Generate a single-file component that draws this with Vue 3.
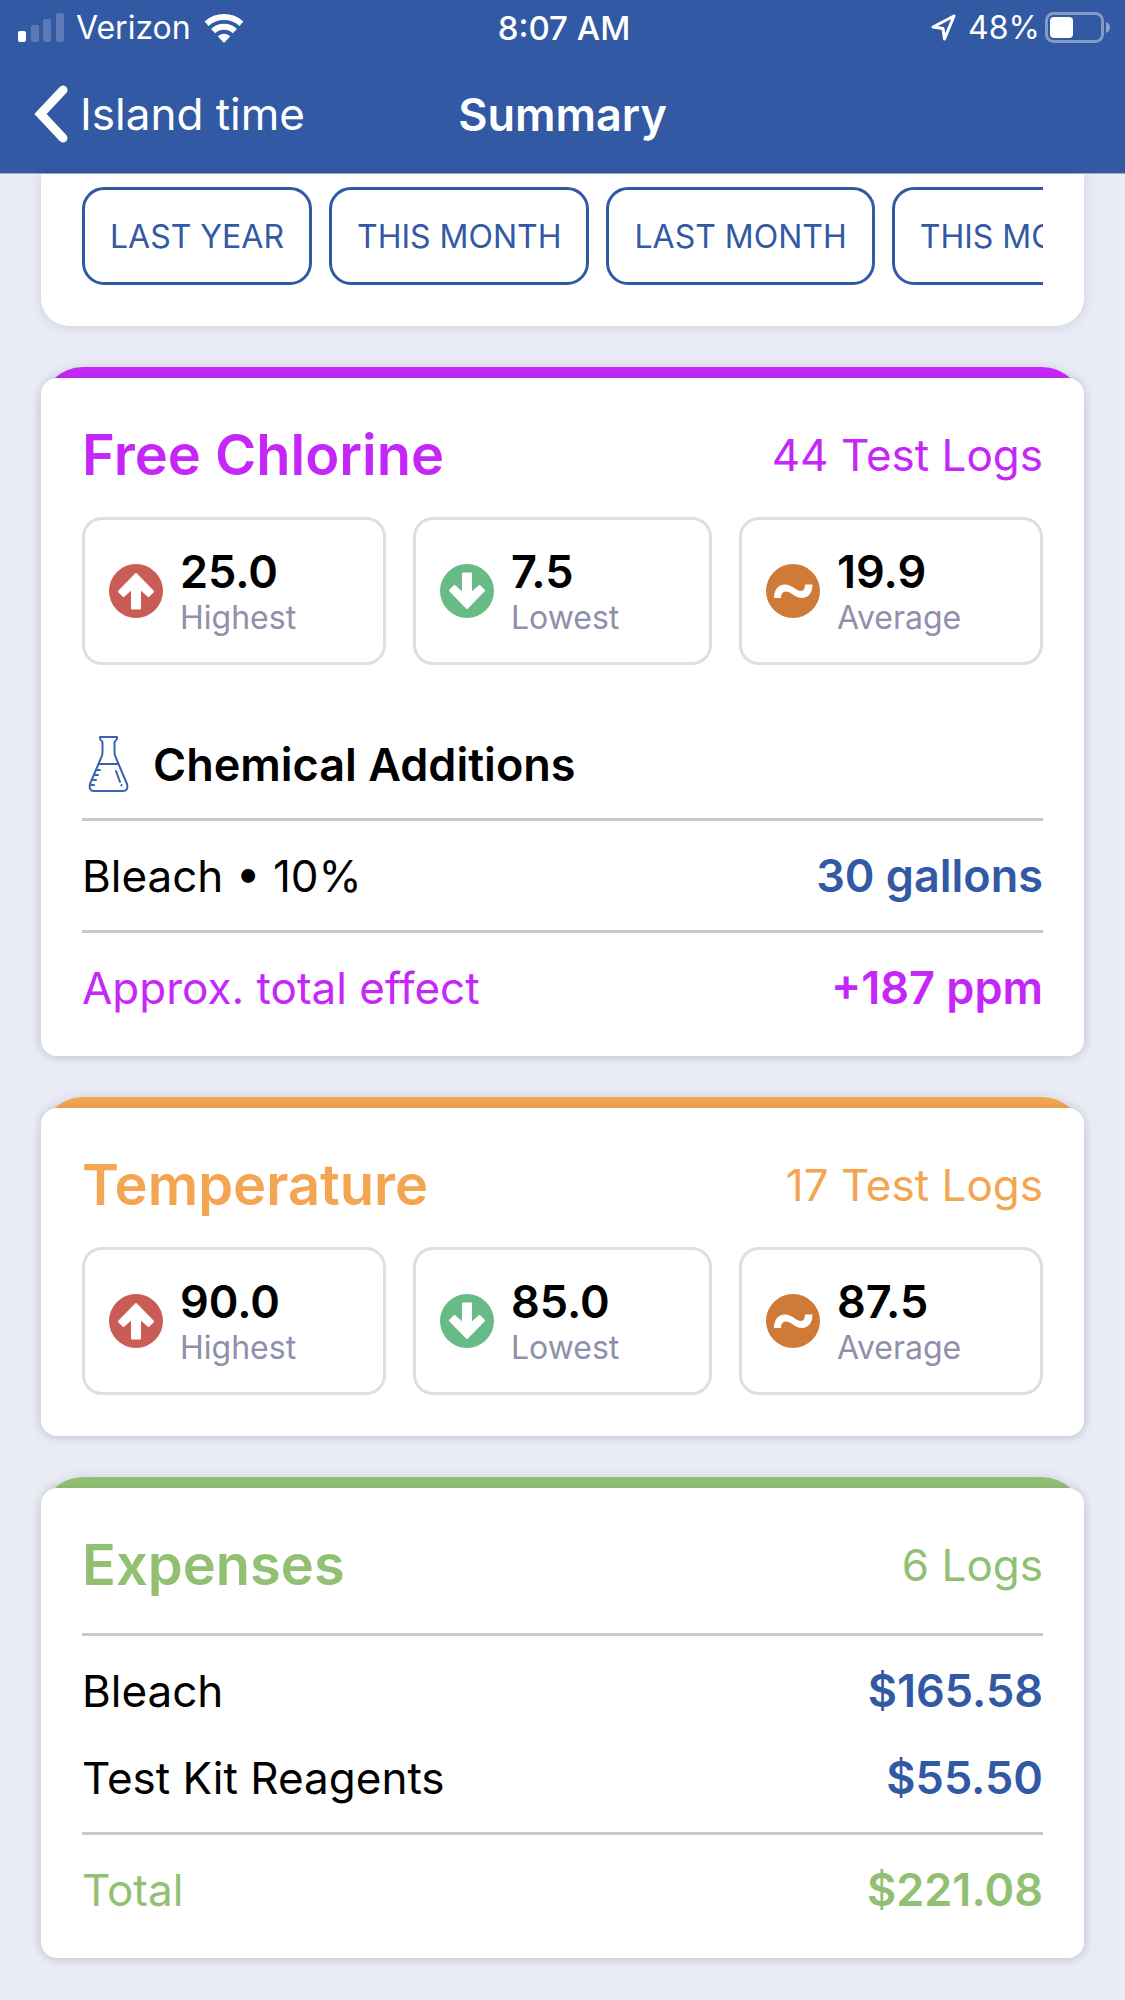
<script setup>
const ranges = ['LAST YEAR', 'THIS MONTH', 'LAST MONTH', 'THIS MONTH']

const cards = [
  {
    name: 'Free Chlorine',
    tone: 'purple',
    logs: '44 Test Logs',
    stats: [
      { kind: 'high', value: '25.0', label: 'Highest' },
      { kind: 'low', value: '7.5', label: 'Lowest' },
      { kind: 'average', value: '19.9', label: 'Average' },
    ],
    section: 'Chemical Additions',
    rows: [{ label: 'Bleach • 10%', value: '30 gallons' }],
    total: { label: 'Approx. total effect', value: '+187 ppm' },
  },
  {
    name: 'Temperature',
    tone: 'orange',
    logs: '17 Test Logs',
    stats: [
      { kind: 'high', value: '90.0', label: 'Highest' },
      { kind: 'low', value: '85.0', label: 'Lowest' },
      { kind: 'average', value: '87.5', label: 'Average' },
    ],
  },
  {
    name: 'Expenses',
    tone: 'green',
    logs: '6 Logs',
    rows: [
      { label: 'Bleach', value: '$165.58' },
      { label: 'Test Kit Reagents', value: '$55.50' },
    ],
    total: { label: 'Total', value: '$221.08' },
  },
]
</script>

<template>
  <div class="screen">
    <header class="topbar">
      <div class="status">
        <div class="status-side">
          <svg class="signal" width="46" height="29" viewBox="0 0 46 29" fill="#fff" aria-hidden="true">
            <rect x="0" y="18" width="8" height="11" rx="2" />
            <g opacity="0.2">
              <rect x="13" y="12" width="8" height="17" rx="2" />
              <rect x="25" y="6" width="8" height="23" rx="2" />
              <rect x="38" y="0" width="8" height="29" rx="2" />
            </g>
          </svg>
          <span class="carrier">Verizon</span>
          <svg width="42" height="30" viewBox="0 0 42 30" fill="none" stroke="#fff" aria-hidden="true">
            <path d="M3.6 10.7A26 26 0 0 1 38.4 10.7" stroke-width="6" />
            <path d="M10.1 18.1A16 16 0 0 1 31.9 18.1" stroke-width="6" />
            <path d="M21 30L14.7 23.3A9 9 0 0 1 27.3 23.3Z" fill="#fff" stroke="none" />
          </svg>
        </div>
        <span class="time">8:07 AM</span>
        <div class="status-side status-right">
          <svg width="25" height="27" viewBox="0 0 25 27" fill="none" stroke="#fff" stroke-width="3" stroke-linejoin="round" aria-hidden="true">
            <path d="M23 2L2 13L12 14.500L13.500 25Z" />
          </svg>
          <span class="percent">48%</span>
          <svg width="65" height="31" viewBox="0 0 65 31" aria-hidden="true">
            <rect x="1.500" y="1.500" width="56" height="28" rx="7" fill="none" stroke="#fff" stroke-width="3" opacity="0.4" />
            <rect x="5" y="5" width="23" height="21" rx="4" fill="#fff" />
            <path d="M61 10Q65 12 65 15.500Q65 19 61 21Z" fill="#fff" opacity="0.45" />
          </svg>
        </div>
      </div>
      <nav class="nav">
        <button class="back" type="button">
          <svg width="34" height="58" viewBox="0 0 34 58" fill="none" stroke="#fff" stroke-width="9" stroke-linecap="round" aria-hidden="true">
            <path d="M29 5L6.500 29L29 53" />
          </svg>
          Island time
        </button>
        <h1 class="title">Summary</h1>
      </nav>
    </header>

    <main class="content">
      <section class="filters">
        <div class="filter-strip">
          <button v-for="(range, i) in ranges" :key="i" class="chip" type="button">{{ range }}</button>
        </div>
      </section>

      <article v-for="card in cards" :key="card.name" class="card" :class="card.tone">
        <div class="body" :class="{ listed: card.rows }">
          <div class="head">
            <h2 class="name">{{ card.name }}</h2>
            <span class="logs">{{ card.logs }}</span>
          </div>

          <div v-if="card.stats" class="stats">
            <div v-for="stat in card.stats" :key="stat.kind" class="stat">
              <svg class="stat-icon" :class="stat.kind" width="54" height="54" viewBox="0 0 54 54" aria-hidden="true">
                <circle cx="27" cy="27" r="27" fill="currentColor" />
                <path
                  v-if="stat.kind === 'average'"
                  d="M8 34C8 26 12 20.500 19 20.500C26 20.500 30 27 35 27C38 27 39 24 39 20.500H46.500C46.500 29 42 34 36 34C29 34 25 27.500 20 27.500C16.500 27.500 15 30.500 15 34Z"
                  fill="#fff"
                />
                <path
                  v-else
                  d="M27 10L44 27.500L39.500 32L31 24.500V44.500H23V24.500L14.500 32L10 27.500Z"
                  fill="#fff"
                  stroke="#fff"
                  stroke-width="2"
                  stroke-linejoin="round"
                  :transform="stat.kind === 'low' ? 'rotate(180 27 27)' : undefined"
                />
              </svg>
              <div class="stat-text">
                <strong class="stat-value">{{ stat.value }}</strong>
                <span class="stat-label">{{ stat.label }}</span>
              </div>
            </div>
          </div>

          <h3 v-if="card.section" class="section">
            <svg width="55" height="56" viewBox="-7 -1 55 56" fill="none" stroke="#3b62b0" stroke-width="2" stroke-linecap="round" stroke-linejoin="round" aria-hidden="true">
              <path d="M11 0H28Q28.500 3 25.500 5V16Q25.500 18 27 21L38 47Q39.500 54 34 54H5Q-0.500 54 1 47L12 21Q13.500 18 13.500 16V5Q10.500 3 11 0Z" />
              <path d="M10 27H29M8 33H11M6 38H9M4 43H7M2 48H5M27 34L31 45M32.500 48V48.500" />
            </svg>
            {{ card.section }}
          </h3>

          <dl v-if="card.rows" class="list" :class="{ spaced: !card.section }">
            <div class="group">
              <div v-for="row in card.rows" :key="row.label" class="row">
                <dt>{{ row.label }}</dt>
                <dd>{{ row.value }}</dd>
              </div>
            </div>
            <div class="group total">
              <div class="row">
                <dt>{{ card.total.label }}</dt>
                <dd>{{ card.total.value }}</dd>
              </div>
            </div>
          </dl>
        </div>
      </article>
    </main>
  </div>
</template>

<style>
body {
  margin: 0;
  background: #e9ebf5;
}
</style>

<style scoped>
.screen {
  min-height: 100vh;
  background: #e9ebf5;
  color: #000;
  font-family: Inter, "Liberation Sans", sans-serif;
  font-size: 44px;
}

button {
  font: inherit;
  cursor: pointer;
}

.topbar {
  background: #3259a4;
  border-bottom: 1px solid #a9adb8;
  color: #fff;
}

.status {
  display: grid;
  grid-template-columns: 1fr auto 1fr;
  align-items: center;
  height: 55px;
  padding: 0 15px 0 18px;
  font-size: 32px;
}

.status-side {
  display: flex;
  align-items: center;
}

.status-right {
  justify-content: flex-end;
}

.carrier {
  margin: 0 12px;
}

.time {
  font-size: 33px;
  font-weight: 500;
}

.percent {
  margin: 0 5px 0 12px;
}

.nav {
  display: grid;
  grid-template-columns: 1fr auto 1fr;
  align-items: center;
  height: 118px;
  padding: 0 34px;
}

.back {
  display: flex;
  align-items: center;
  gap: 12px;
  padding: 0;
  border: 0;
  background: none;
  color: inherit;
}

.title {
  margin: 0;
  font-size: 45px;
  font-weight: 600;
}

.content {
  display: flex;
  flex-direction: column;
  gap: 41px;
  padding: 0 41px 41px;
}

.filters {
  padding: 13px 41px 41px;
  background: #fff;
  border-radius: 0 0 28px 28px;
  box-shadow: 0 1px 12px rgba(40, 40, 70, 0.14);
}

.filter-strip {
  display: flex;
  gap: 17px;
  overflow: hidden;
}

.chip {
  flex: none;
  height: 98px;
  padding: 0 25px;
  border: 3px solid #3259a4;
  border-radius: 22px;
  background: #fff;
  color: #3259a4;
  font-size: 32px;
}

.card {
  padding-top: 11px;
  border-radius: 42px 42px 16px 16px;
  background: linear-gradient(var(--tone), var(--tone)) top / 100% 40px no-repeat;
  box-shadow: 0 0 12px rgba(40, 40, 70, 0.12);
}

.purple {
  --tone: #c527f8;
}

.orange {
  --tone: #f3a551;
}

.green {
  --tone: #91c073;
}

.body {
  padding: 41px;
  border-radius: 16px;
  background: #fff;
  box-shadow: 0 0 10px rgba(40, 40, 40, 0.14);
}

.listed {
  padding-bottom: 14px;
}

.head {
  display: flex;
  align-items: center;
  justify-content: space-between;
  height: 72px;
  color: var(--tone);
}

.name {
  margin: 0;
  font-size: 56px;
  font-weight: 600;
}

.stats {
  display: grid;
  grid-template-columns: 61fr 60fr 61fr;
  gap: 27px;
  margin-top: 26px;
}

.stat {
  display: flex;
  align-items: center;
  gap: 17px;
  padding: 25px 24px;
  border: 3px solid #dedee8;
  border-radius: 20px;
}

.stat-icon {
  flex: none;
}

.high {
  color: #c95c54;
}

.low {
  color: #68bb87;
}

.average {
  color: #cf7b37;
}

.stat-text {
  display: flex;
  flex-direction: column;
}

.stat-value {
  font-size: 45px;
  font-weight: 600;
  line-height: 54px;
}

.stat-label {
  color: #908fac;
  font-size: 32px;
  line-height: 38px;
}

.section {
  display: flex;
  align-items: center;
  gap: 16px;
  height: 108px;
  margin: 45px 0 0;
  font-size: 45px;
  font-weight: 600;
}

.list {
  margin: 0;
}

.spaced {
  margin-top: 32px;
}

.group {
  padding: 11px 0;
  border-top: 3px solid #c8c8ca;
}

.row {
  display: flex;
  align-items: center;
  justify-content: space-between;
  height: 87px;
}

.row dd {
  margin: 0;
  color: #3259a4;
  font-size: 45px;
  font-weight: 600;
}

.total .row,
.total dd {
  color: var(--tone);
}
</style>
